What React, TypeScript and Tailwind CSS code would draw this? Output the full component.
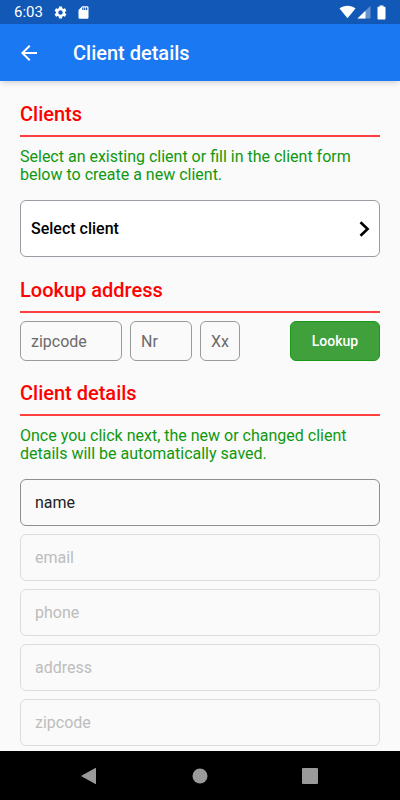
/* src/App.tsx */

import type { ReactNode } from 'react';
import { MdArrowBack, MdSettings, MdSdCard } from 'react-icons/md';
import clsx from 'clsx';

const detailFields = [
    { id: 'name', enabled: true },
    { id: 'email', enabled: false },
    { id: 'phone', enabled: false },
    { id: 'address', enabled: false },
    { id: 'zipcode', enabled: false },
];

const lookupFields = [
    { id: 'lookup-zipcode', label: 'zipcode', width: 'w-[102px]' },
    { id: 'lookup-nr', label: 'Nr', width: 'w-[62px]' },
    { id: 'lookup-xx', label: 'Xx', width: 'w-[40px]' },
];

const StatusBar = () => (
    <div className="h-6 shrink-0 bg-[#1158b7] text-white flex items-center justify-between px-[14px]">
        <div className="flex items-center">
            <span className="text-[15px] leading-6">6:03</span>
            <MdSettings className="ml-[10px]" size={15} />
            <MdSdCard className="ml-2" size={15} />
        </div>
        <div className="flex items-center">
            {/* Wifi */}
            <svg width="17" height="14" viewBox="0 0 17 14" fill="currentColor">
                <path d="M0.5 3.4C5 0 12 0 16.5 3.4L8.5 13.2Z" />
            </svg>
            {/* Signal */}
            <svg className="ml-px" width="14" height="14" viewBox="0 0 14 14" fill="currentColor">
                <path d="M13.5 0.8V13.5H0.5Z" opacity="0.35" />
                <path d="M8.5 5.7V13.5H0.5Z" />
            </svg>
            {/* Battery */}
            <svg className="ml-[6px]" width="9" height="15" viewBox="0 0 9 15" fill="currentColor">
                <path d="M2.5 0.5h4v1.3h1.2q0.8 0 0.8 0.8v11q0 0.9-0.8 0.9H1.3q-0.8 0-0.8-0.9V2.6q0-0.8 0.8-0.8H2.5z" />
            </svg>
        </div>
    </div>
);

const AppBar = () => (
    <header className="relative h-[57px] shrink-0 bg-[#1a78f2] text-white flex items-center px-[17px] shadow-md">
        <button type="button" aria-label="Back" className="w-6 h-6 flex items-center justify-center">
            <MdArrowBack size={24} />
        </button>
        <h1 className="ml-8 text-xl leading-[26px] font-medium">Client details</h1>
    </header>
);

const SectionTitle = ({ children }: { children: ReactNode }) => (
    <h2 className="text-xl leading-[26px] font-medium text-[#ff0000] pb-2 border-b-2 border-[#ff4040]">
        {children}
    </h2>
);

const NavigationBar = () => (
    <nav className="h-[49px] shrink-0 bg-black text-[#9a9a9a] flex items-center justify-center gap-[86px]">
        <button type="button" aria-label="Back" className="w-6 h-6 flex items-center justify-center">
            <svg width="18" height="18" viewBox="0 0 18 18" fill="currentColor">
                <path d="M15 1.2v15.6q0 0.6-0.6 0.3L0.8 9.5Q0.2 9 0.8 8.5L14.4 0.9q0.6-0.3 0.6 0.3z" />
            </svg>
        </button>
        <button type="button" aria-label="Home" className="w-6 h-6 flex items-center justify-center">
            <svg width="16" height="16" viewBox="0 0 16 16" fill="currentColor">
                <circle cx="8" cy="8" r="7.5" />
            </svg>
        </button>
        <button type="button" aria-label="Recents" className="w-6 h-6 flex items-center justify-center">
            <svg width="16" height="16" viewBox="0 0 16 16" fill="currentColor">
                <rect width="16" height="16" rx="1" />
            </svg>
        </button>
    </nav>
);

export default function App() {
    return (
        <div className="h-dvh flex flex-col bg-[#fafafa] font-['Roboto',sans-serif]">
            <StatusBar />
            <AppBar />

            <main className="flex-1 min-h-0 overflow-y-auto px-5 pt-5 pb-1">
                <section>
                    <SectionTitle>Clients</SectionTitle>
                    <p className="mt-[11px] text-base leading-[18px] text-[#109810]">
                        Select an existing client or fill in the client form below to create a new client.
                    </p>
                    <button
                        type="button"
                        className="mt-4 w-full h-[57px] flex items-center justify-between pl-[10px] pr-[9px] bg-white border border-[#9a9da3] rounded-md text-base font-medium text-black"
                    >
                        Select client
                        <svg width="11" height="16" viewBox="0 0 11 16" fill="none" stroke="currentColor" strokeWidth="2.6">
                            <path d="M1.5 1.2L8.6 8L1.5 14.8" />
                        </svg>
                    </button>
                </section>

                <section className="mt-5">
                    <SectionTitle>Lookup address</SectionTitle>
                    <form className="mt-2 flex items-center gap-2">
                        {lookupFields.map((field) => (
                            <input
                                key={field.id}
                                id={field.id}
                                aria-label={field.label}
                                placeholder={field.label}
                                className={clsx(
                                    'h-10 px-[10px] border border-[#9a9a9a] rounded-md text-base placeholder:text-[#6b6b6b]',
                                    field.width
                                )}
                            />
                        ))}
                        <button
                            type="button"
                            className="ml-auto w-[90px] h-10 bg-[#3fa03c] border border-[#189a18] rounded-md text-sm font-medium text-white"
                        >
                            Lookup
                        </button>
                    </form>
                </section>

                <section className="mt-[19px]">
                    <SectionTitle>Client details</SectionTitle>
                    <p className="mt-[11px] text-base leading-[18px] text-[#109810]">
                        Once you click next, the new or changed client details will be automatically saved.
                    </p>
                    <form className="mt-4 flex flex-col gap-2">
                        {detailFields.map((field) => (
                            <input
                                key={field.id}
                                id={field.id}
                                aria-label={field.id}
                                placeholder={field.id}
                                disabled={!field.enabled}
                                className={clsx(
                                    'w-full h-[47px] px-[14px] border rounded-md text-base',
                                    field.enabled
                                        ? 'border-[#8e8e8e] placeholder:text-[#222222]'
                                        : 'border-[#dcdcdc] placeholder:text-[#bdbdbd]'
                                )}
                            />
                        ))}
                    </form>
                </section>
            </main>

            <NavigationBar />
        </div>
    );
}
